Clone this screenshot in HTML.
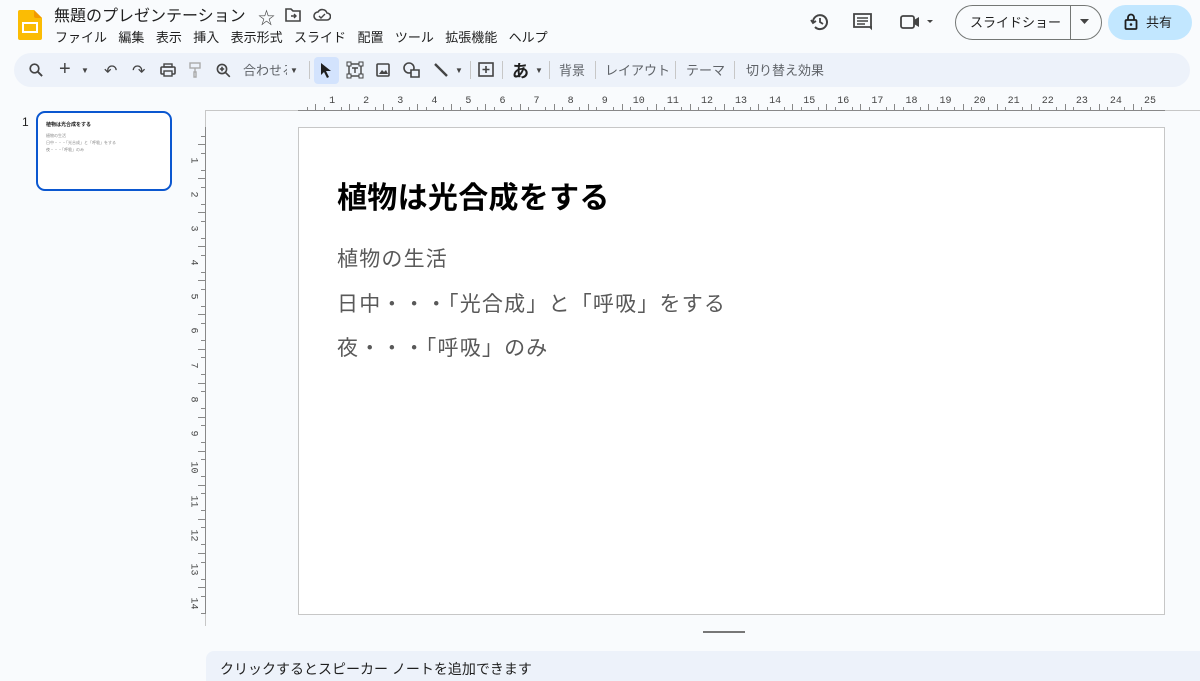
<!DOCTYPE html>
<html><head><meta charset="utf-8"><style>
*{box-sizing:border-box;margin:0;padding:0}
body{width:1200px;height:669px;overflow:hidden;background:#f9fbfd;font-family:"Liberation Sans","Noto Sans CJK JP",sans-serif;position:relative;color:#1f1f1f}
.abs{position:absolute}
.menu span{margin-right:11.4px}
.tb{position:absolute;left:14px;top:53px;width:1176px;height:34px;background:#edf2fa;border-radius:17px}
.ic{position:absolute;top:0;height:34px;display:flex;align-items:center;justify-content:center;color:#444;font-size:14px}
.sep{position:absolute;top:61px;width:1px;height:18px;background:#c7c7c7}
.tx{position:absolute;top:60px;font-size:13px;color:#5f6368}
.rn{position:absolute;font-family:"Liberation Mono",monospace;font-size:10px;color:#444}
.tk{position:absolute;background:#888}
</style></head><body>
<svg class="abs" style="left:18px;top:10px" width="24" height="30" viewBox="0 0 24 30"><path d="M2 0h14l8 8v20a2 2 0 0 1-2 2H2a2 2 0 0 1-2-2V2a2 2 0 0 1 2-2z" fill="#fbbc04"/><path d="M16 0l8 8h-6a2 2 0 0 1-2-2z" fill="#f29900"/><rect x="5" y="13" width="14" height="9" fill="none" stroke="#fff" stroke-width="2"/></svg>
<div class="abs" style="left:54px;top:2px;font-size:16px;color:#1f1f1f">無題のプレゼンテーション</div>
<div class="abs" style="left:258px;top:4px;font-size:17px;color:#444">☆</div>
<svg class="abs" style="left:285px;top:8px" width="16" height="14" viewBox="0 0 16 14"><path d="M1 1h5l2 2h7v10H1z" fill="none" stroke="#444" stroke-width="1.6"/><path d="M6 8h5M9 6l2 2-2 2" stroke="#444" stroke-width="1.4" fill="none"/></svg>
<svg class="abs" style="left:313px;top:8px" width="18" height="13" viewBox="0 0 18 13"><path d="M5 12a4 4 0 0 1 0-8 5 5 0 0 1 9 1 3.5 3.5 0 0 1 0 7z" fill="none" stroke="#444" stroke-width="1.6"/><path d="M6 8l2 2 4-4" stroke="#444" stroke-width="1.4" fill="none"/></svg>
<div class="abs menu" style="left:55px;top:27px;font-size:13px;color:#1f1f1f;white-space:nowrap"><span>ファイル</span><span>編集</span><span>表示</span><span>挿入</span><span>表示形式</span><span>スライド</span><span>配置</span><span>ツール</span><span>拡張機能</span><span>ヘルプ</span></div>
<svg class="abs" style="left:810px;top:12px" width="20" height="20" viewBox="0 0 20 20"><path d="M3 10a7 7 0 1 1 2 5" fill="none" stroke="#444" stroke-width="2"/><path d="M1 8l2 3 3-2" fill="none" stroke="#444" stroke-width="1.8"/><path d="M10 6v4l3 2" fill="none" stroke="#444" stroke-width="1.8"/></svg>
<svg class="abs" style="left:853px;top:13px" width="19" height="19" viewBox="0 0 19 19"><path d="M1 1h17v13h3v4l-4-4H1z" fill="none" stroke="#444" stroke-width="1.8"/><path d="M4 5h11M4 8h11M4 11h8" stroke="#444" stroke-width="1.6"/></svg>
<svg class="abs" style="left:900px;top:14px" width="38" height="16" viewBox="0 0 38 16"><rect x="1" y="2" width="13" height="12" rx="2" fill="none" stroke="#444" stroke-width="1.8"/><path d="M14 6l5-3v10l-5-3z" fill="#444"/><path d="M27 6h6l-3 3z" fill="#444"/></svg>
<div class="abs" style="left:955px;top:5px;width:147px;height:35px;border:1px solid #747775;border-radius:18px"></div>
<div class="abs" style="left:1070px;top:5px;width:1px;height:35px;background:#747775"></div>
<div class="abs" style="left:970px;top:12px;font-size:13px;color:#1f1f1f">スライドショー</div>
<svg class="abs" style="left:1080px;top:19px" width="9" height="5"><path d="M0 0h9L4.5 5z" fill="#444"/></svg>
<div class="abs" style="left:1108px;top:5px;width:84px;height:35px;background:#c2e7ff;border-radius:18px"></div>
<svg class="abs" style="left:1124px;top:13px" width="14" height="17" viewBox="0 0 14 17"><rect x="1.5" y="7" width="11" height="9" rx="1" fill="none" stroke="#1f1f1f" stroke-width="1.8"/><path d="M4 7V4.5a3 3 0 0 1 6 0V7" fill="none" stroke="#1f1f1f" stroke-width="1.8"/><circle cx="7" cy="11.5" r="1.3" fill="#1f1f1f"/></svg>
<div class="abs" style="left:1146px;top:12px;font-size:13px;color:#1f1f1f">共有</div>
<div class="tb"></div>
<div class="abs" style="left:314px;top:57px;width:25px;height:27px;background:#d3e3fd;border-radius:4px"></div>
<svg class="abs" style="left:29px;top:63px" width="14" height="14" viewBox="0 0 14 14"><circle cx="5.5" cy="5.5" r="4.3" fill="none" stroke="#444" stroke-width="1.7"/><path d="M8.6 8.6l4.5 4.5" stroke="#444" stroke-width="1.9"/></svg>
<div class="ic" style="left:59px;top:52px;font-size:20px">+</div>
<div class="ic" style="left:81px;top:53px;font-size:8px">▼</div>
<div class="ic" style="left:104px;top:54px;font-size:16px">↶</div>
<div class="ic" style="left:132px;top:54px;font-size:16px">↷</div>
<svg class="abs" style="left:160px;top:63px" width="16" height="14" viewBox="0 0 16 14"><rect x="1" y="4" width="14" height="7" rx="1" fill="none" stroke="#444" stroke-width="1.6"/><rect x="4" y="1" width="8" height="3" fill="none" stroke="#444" stroke-width="1.4"/><rect x="4" y="8" width="8" height="5" fill="#edf2fa" stroke="#444" stroke-width="1.4"/></svg>
<svg class="abs" style="left:189px;top:62px" width="12" height="16" viewBox="0 0 12 16"><rect x="1" y="1" width="10" height="5" fill="none" stroke="#aaa" stroke-width="1.4"/><path d="M6 6v4M5 10h2v5H5z" fill="none" stroke="#aaa" stroke-width="1.4"/></svg>
<svg class="abs" style="left:216px;top:63px" width="15" height="15" viewBox="0 0 15 15"><circle cx="6" cy="6" r="4.6" fill="none" stroke="#444" stroke-width="1.6"/><path d="M9.3 9.3l4.5 4.5M6 3.8v4.4M3.8 6h4.4" stroke="#444" stroke-width="1.6"/></svg>
<div class="tx" style="left:243px;width:44px;overflow:hidden;white-space:nowrap">合わせる</div>
<div class="ic" style="left:290px;top:53px;font-size:8px">▼</div>
<div class="sep" style="left:309px"></div>
<svg class="abs" style="left:320px;top:62px" width="12" height="16" viewBox="0 0 12 16"><path d="M1 1l10 8H6l3 6-2 1-3-6-3 3z" fill="#1f1f1f"/></svg>
<svg class="abs" style="left:346px;top:61px" width="18" height="18" viewBox="0 0 18 18"><rect x="3" y="3" width="12" height="12" fill="none" stroke="#444" stroke-width="1.4"/><rect x="1" y="1" width="4" height="4" fill="#edf2fa" stroke="#444"/><rect x="13" y="1" width="4" height="4" fill="#edf2fa" stroke="#444"/><rect x="1" y="13" width="4" height="4" fill="#edf2fa" stroke="#444"/><rect x="13" y="13" width="4" height="4" fill="#edf2fa" stroke="#444"/><path d="M6 7h6M9 7v5" stroke="#444" stroke-width="1.4"/></svg>
<svg class="abs" style="left:376px;top:63px" width="14" height="14" viewBox="0 0 14 14"><rect x="1" y="1" width="12" height="12" rx="1" fill="none" stroke="#444" stroke-width="1.6"/><path d="M3 11l3-4 2 2 2-2 2 4z" fill="#444"/></svg>
<svg class="abs" style="left:403px;top:62px" width="17" height="16" viewBox="0 0 17 16"><circle cx="6" cy="6" r="5" fill="none" stroke="#444" stroke-width="1.6"/><path d="M8 8h8v7H8z" fill="#edf2fa" stroke="#444" stroke-width="1.6"/></svg>
<svg class="abs" style="left:433px;top:62px" width="16" height="16"><path d="M2 2l12 12" stroke="#444" stroke-width="2.4"/></svg>
<div class="ic" style="left:455px;top:53px;font-size:8px">▼</div>
<div class="sep" style="left:470px"></div>
<svg class="abs" style="left:478px;top:62px" width="16" height="16" viewBox="0 0 16 16"><rect x="1" y="1" width="14" height="13" fill="none" stroke="#444" stroke-width="1.6"/><path d="M8 4v7M4.5 7.5h7" stroke="#444" stroke-width="1.6"/></svg>
<div class="sep" style="left:502px"></div>
<div class="abs" style="left:512px;top:57px;font-size:17px;color:#1f1f1f;font-weight:bold">あ</div>
<div class="ic" style="left:535px;top:53px;font-size:8px">▼</div>
<div class="sep" style="left:549px"></div>
<div class="tx" style="left:559px">背景</div>
<div class="sep" style="left:595px"></div>
<div class="tx" style="left:605px">レイアウト</div>
<div class="sep" style="left:675px"></div>
<div class="tx" style="left:686px">テーマ</div>
<div class="sep" style="left:734px"></div>
<div class="tx" style="left:746px">切り替え効果</div>
<div class="abs" style="left:22px;top:115px;font-size:12px;color:#1f1f1f">1</div>
<div class="abs" style="left:36px;top:111px;width:136px;height:80px;border:2.5px solid #0b57d0;border-radius:9px;background:#fff;padding:9px 0 0 8px;font-size:4px;color:#888;line-height:7px">
<div style="font-weight:bold;color:#111;font-size:5px;margin-bottom:3px">植物は光合成をする</div>
<div>植物の生活</div><div>日中・・・「光合成」と「呼吸」をする</div><div>夜・・・「呼吸」のみ</div></div>
<div class="abs" style="left:205px;top:110px;width:995px;height:1px;background:#c7c7c7"></div>
<div class="abs" style="left:205px;top:110px;width:1px;height:516px;background:#c7c7c7"></div>
<div class="abs" style="left:298px;top:110px;width:867px;height:1px;background:#888"></div>
<div class="abs" style="left:205px;top:127px;width:1px;height:487px;background:#888"></div>
<div id="ru"></div>
<div class="abs" style="left:298px;top:127px;width:867px;height:488px;background:#fff;border:1px solid #c7c7c7"></div>
<div class="abs" style="left:337px;top:173px;font-size:30px;font-weight:bold;color:#000;letter-spacing:0.3px">植物は光合成をする</div>
<div class="abs" style="left:337px;top:238px;font-size:21px;color:#595959;line-height:44.5px;letter-spacing:1.2px">植物の生活<br>日中・・・「光合成」と「呼吸」をする<br>夜・・・「呼吸」のみ</div>
<div class="abs" style="left:703px;top:631px;width:42px;height:2px;background:#777"></div>
<div class="abs" style="left:206px;top:651px;width:994px;height:30px;background:#edf2fa;border-radius:8px 0 0 0"></div>
<div class="abs" style="left:220px;top:659px;font-size:14px;color:#1f1f1f">クリックするとスピーカー ノートを追加できます</div>
<script>
var h='',u=34.08;
for(var i=0;i<=100;i++){var x=298+i*u/4;if(x>1165)break;var m=i%4;
 if(m==0){if(i>0)h+='<div class="rn" style="left:'+(x-(i>=40?6:3))+'px;top:96px">'+(i/4)+'</div>';}
 else h+='<div class="tk" style="left:'+x+'px;top:'+(m==2?104:107)+'px;width:1px;height:'+(m==2?7:4)+'px"></div>';}
for(var i=0;i<=60;i++){var y=127+i*u/4;if(y>614)break;var m=i%4;
 if(m==0){if(i>0)h+='<div class="rn" style="left:'+(i>=40?187:190)+'px;top:'+(y-6)+'px;transform:rotate(90deg)">'+(i/4)+'</div>';}
 else h+='<div class="tk" style="top:'+y+'px;left:'+(m==2?198:201)+'px;height:1px;width:'+(m==2?7:4)+'px"></div>';}
document.getElementById('ru').innerHTML=h;
</script>
</body></html>
